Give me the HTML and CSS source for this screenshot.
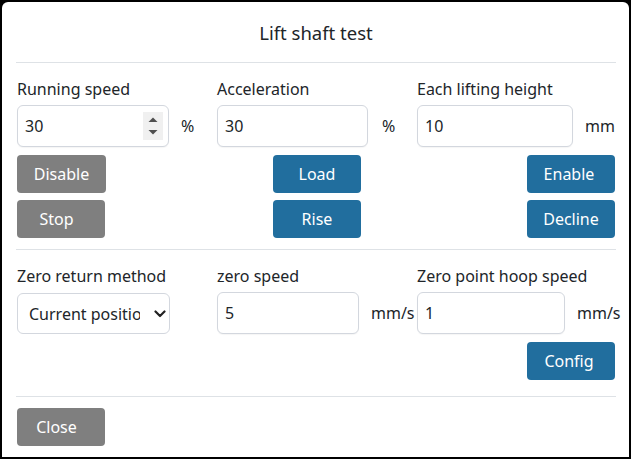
FILE: index.html
```html
<!DOCTYPE html>
<html>
<head>
<meta charset="utf-8">
<link rel="stylesheet" href="styles.css">
</head>
<body>
<div class="modal">
  <div class="modal-header"><h5 class="title">Lift shaft test</h5></div>
  <div class="section section-top">
    <div class="grid">
      <div class="col">
        <label class="label">Running speed</label>
        <div class="field">
          <div class="num-wrap">
            <input class="input w152" type="text" value="30">
            <span class="spinner">
              <svg width="20" height="28" viewBox="0 0 20 28"><rect width="20" height="28" fill="#f0f0f0"/><path d="M5.5 10 L10 5.5 L14.5 10 Z" fill="#4f4f4f"/><path d="M5.5 18 L10 22.5 L14.5 18 Z" fill="#4f4f4f"/></svg>
            </span>
          </div>
          <span class="unit">%</span>
        </div>
        <div class="btns btns-left">
          <button class="btn btn-gray w89">Disable</button>
          <button class="btn btn-gray btn-shift">Stop</button>
        </div>
      </div>
      <div class="col">
        <label class="label">Acceleration</label>
        <div class="field gap14">
          <input class="input w151" type="text" value="30">
          <span class="unit">%</span>
        </div>
        <div class="btns btns-mid">
          <button class="btn btn-blue">Load</button>
          <button class="btn btn-blue">Rise</button>
        </div>
      </div>
      <div class="col">
        <label class="label">Each lifting height</label>
        <div class="field">
          <input class="input w156" type="text" value="10">
          <span class="unit">mm</span>
        </div>
        <div class="btns btns-right">
          <button class="btn btn-blue btn-shift-sm">Enable</button>
          <button class="btn btn-blue">Decline</button>
        </div>
      </div>
    </div>
  </div>
  <div class="section section-zero">
    <div class="grid">
      <div class="col">
        <label class="label">Zero return method</label>
        <div class="field">
          <div class="select-wrap">
            <select class="select">
              <option>Current position</option>
            </select>
            <svg class="chevron" width="12" height="8" viewBox="0 0 12 8"><path d="M1.5 1.5 L6 6 L10.5 1.5" fill="none" stroke="#222" stroke-width="2.2" stroke-linecap="round" stroke-linejoin="round"/></svg>
          </div>
        </div>
      </div>
      <div class="col">
        <label class="label">zero speed</label>
        <div class="field">
          <input class="input w142" type="text" value="5">
          <span class="unit">mm/s</span>
        </div>
      </div>
      <div class="col">
        <label class="label">Zero point hoop speed</label>
        <div class="field">
          <input class="input w148" type="text" value="1">
          <span class="unit">mm/s</span>
        </div>
        <div class="btns btns-right">
          <button class="btn btn-blue btn-shift-sm">Config</button>
        </div>
      </div>
    </div>
  </div>
  <div class="footer">
    <button class="btn btn-gray btn-shift">Close</button>
  </div>
</div>
</body>
</html>
```
FILE: styles.css
```css
* { box-sizing: border-box; }
html, body { margin: 0; padding: 0; }
body {
  background: #000;
  width: 631px;
  height: 459px;
  overflow: hidden;
  font-family: "Noto Sans", "Open Sans", sans-serif;
  font-size: 16px;
  color: #212529;
}
.modal {
  margin: 2px 2px 0 2px;
  height: 455px;
  background: #fff;
  border-radius: 6px 6px 0 0;
  padding: 0 13px 0 14px;
}
.modal-header {
  height: 61px;
  border-bottom: 1px solid #dee2e6;
  display: flex;
  align-items: center;
  justify-content: center;
}
.title {
  margin: 0;
  font-size: 18.5px;
  font-weight: 400;
  line-height: 24px;
  padding-top: 2px;
}
.section {
  border-bottom: 1px solid #dee2e6;
  padding-top: 14px;
}
.section-top { padding-bottom: 11px; }
.section-zero { padding-bottom: 16px; }
.grid {
  display: grid;
  grid-template-columns: 200px 200px 200px;
  padding-left: 1px;
}
.col { display: flex; flex-direction: column; }
.label {
  display: block;
  line-height: 24px;
  margin-bottom: 4px;
  white-space: nowrap;
}
.field {
  display: flex;
  align-items: center;
  gap: 12px;
  white-space: nowrap;
}
.field.gap14 { gap: 14px; }
.input {
  height: 42px;
  border: 1px solid #d3d7de;
  border-radius: 6px;
  padding: 0 7px;
  font-family: inherit;
  font-size: 16px;
  color: #212529;
  background: #fff;
  outline: none;
  box-shadow: 0 1px 1px rgba(0,0,0,0.04);
}
.w142 { width: 142px; }
.w148 { width: 148px; }
.w151 { width: 151px; }
.w152 { width: 152px; }
.w156 { width: 156px; }
.num-wrap { position: relative; display: flex; }
.spinner {
  position: absolute;
  left: 126px;
  top: 7px;
  width: 20px;
  height: 28px;
  display: block;
}
.spinner svg { display: block; }
.unit { line-height: 24px; color: #212529; }
.select-wrap { position: relative; display: flex; }
.select {
  appearance: none;
  -webkit-appearance: none;
  width: 153px;
  height: 41px;
  margin-top: 1px;
  border: 1px solid #d3d7de;
  border-radius: 6px;
  padding: 0 29px 0 11px;
  font-family: inherit;
  font-size: 16px;
  color: #212529;
  background: #fff;
  outline: none;
}
.chevron {
  position: absolute;
  left: 137px;
  top: 18px;
  pointer-events: none;
}
.btns {
  display: flex;
  flex-direction: column;
  gap: 7px;
  margin-top: 8px;
}
.btns-left { align-items: flex-start; }
.btns-mid { align-items: flex-end; width: 144px; }
.btns-right { align-items: flex-end; width: 198px; }
.btn {
  width: 88px;
  height: 38px;
  border: 1px solid transparent;
  border-radius: 4px;
  font-family: inherit;
  font-size: 16px;
  color: #fff;
  padding: 0;
  line-height: 24px;
}
.btn-shift { padding-right: 9px; }
.btn-shift-sm { padding-right: 4px; }
.w89 { width: 89px; }
.btn-gray { background: #7f7f7f; }
.btn-blue { background: #216e9e; }
.footer {
  padding-top: 11px;
  padding-left: 1px;
}
```
